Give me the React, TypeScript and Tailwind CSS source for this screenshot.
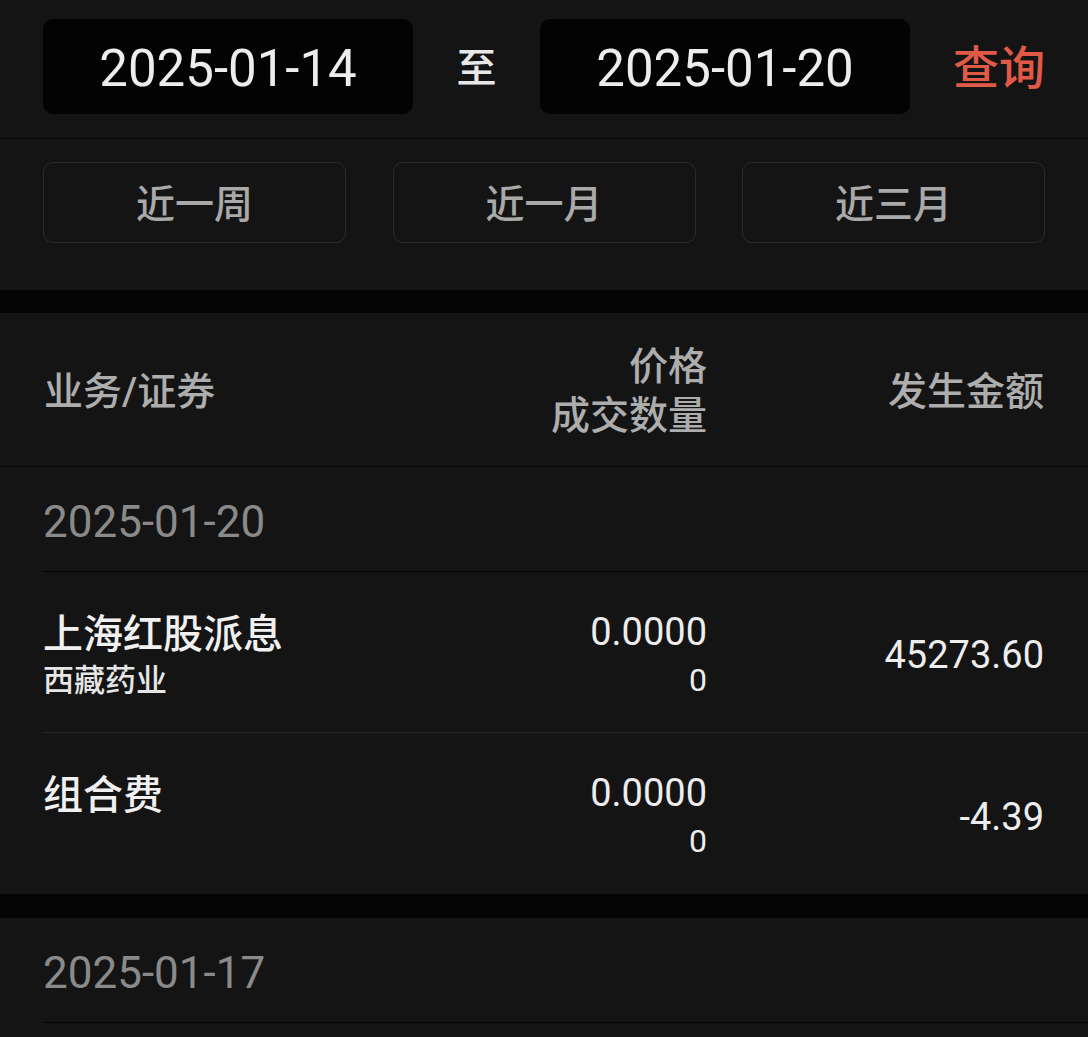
import React from "react";

const F = { fontFamily: 'Roboto, "Noto Sans CJK SC", sans-serif' } as React.CSSProperties;

function DateBox({ v }: { v: string }) {
  return (
    <div className="flex h-[95px] w-[370px] items-center justify-center rounded-[10px] bg-[#030303] pt-[5px] text-[51px] text-[#ededed]">
      {v}
    </div>
  );
}

function QuickBtn({ t }: { t: string }) {
  return (
    <div className="flex h-[81px] w-[303px] items-center justify-center rounded-[10px] border border-[#2c2c2c] pt-[5px] text-[39px] font-medium text-[#a9a9a9]">
      {t}
    </div>
  );
}

function DataRow({
  name,
  sub,
  price,
  qty,
  amount,
  last,
}: {
  name: string;
  sub?: string;
  price: string;
  qty: string;
  amount: string;
  last?: boolean;
}) {
  return (
    <div className={`ml-[43px] flex h-[161px] items-center pr-[44px] pt-[7px] ${last ? "" : "border-b border-[#282828]"}`}>
      <div className="flex flex-1 flex-col">
        <div className="text-[40px] font-medium leading-[50px] text-[#f0f0f0]">{name}</div>
        {sub ? <div className="text-[31px] font-medium leading-[42px] text-[#e6e6e6]">{sub}</div> : <div className="h-[42px]" />}
      </div>
      <div className="flex w-[300px] flex-col items-end">
        <div className="text-[38px] leading-[48px] text-[#ededed]">{price}</div>
        <div className="text-[32px] leading-[48px] text-[#ededed]">{qty}</div>
      </div>
      <div className="flex w-[337px] justify-end text-[38px] text-[#ededed]">{amount}</div>
    </div>
  );
}

export default function App() {
  return (
    <div style={F} className="min-h-[1037px] w-[1088px] overflow-hidden bg-[#141414]">
      {/* date range */}
      <div className="flex h-[138px] items-start px-[43px] pt-[19px]">
        <DateBox v="2025-01-14" />
        <div className="flex h-[95px] w-[127px] items-center justify-center pt-[4px] text-[40px] font-medium text-[#e8e8e8]">至</div>
        <DateBox v="2025-01-20" />
        <div className="flex h-[95px] flex-1 items-center justify-end pt-[4px] text-[46px] font-medium text-[#e05a47]">查询</div>
      </div>
      <div className="h-px bg-[#070707]" />
      {/* quick buttons */}
      <div className="flex h-[151px] items-start justify-between px-[43px] pt-[23px]">
        <QuickBtn t="近一周" />
        <QuickBtn t="近一月" />
        <QuickBtn t="近三月" />
      </div>
      <div className="h-[23px] bg-[#050505]" />
      {/* header */}
      <div className="flex h-[154px] items-center border-b border-[#070707] px-[44px] pt-[5px] font-medium text-[#adadad]">
        <div className="flex-1 text-[39px]">业务/证券</div>
        <div className="flex w-[300px] flex-col items-end text-[39px] leading-[49px]">
          <div>价格</div>
          <div>成交数量</div>
        </div>
        <div className="flex w-[337px] justify-end text-[39px]">发生金额</div>
      </div>
      {/* date group 1 */}
      <div className="ml-[43px] flex h-[105px] items-center border-b border-[#060606] pt-[6px] text-[44px] text-[#8a8a8a]">
        2025-01-20
      </div>
      <DataRow name="上海红股派息" sub="西藏药业" price="0.0000" qty="0" amount="45273.60" />
      <DataRow name="组合费" price="0.0000" qty="0" amount="-4.39" last />
      <div className="h-[24px] bg-[#050505]" />
      {/* date group 2 */}
      <div className="ml-[43px] flex h-[105px] items-center border-b border-[#060606] pt-[6px] text-[44px] text-[#8a8a8a]">
        2025-01-17
      </div>
    </div>
  );
}
